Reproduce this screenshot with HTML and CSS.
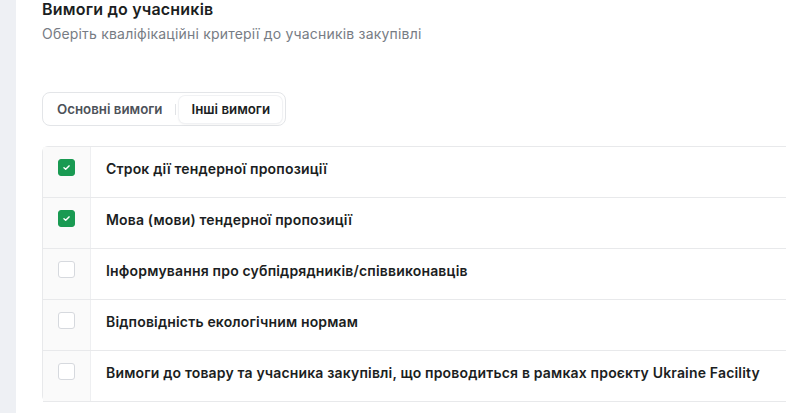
FILE: index.html
```html
<!DOCTYPE html>
<html lang="uk">
<head>
<meta charset="utf-8">
<link rel="stylesheet" href="styles.css">
</head>
<body>
<div class="page">
  <aside class="rail"></aside>
  <main class="content">
    <h1 class="title">Вимоги до учасників</h1>
    <p class="subtitle">Оберіть кваліфікаційні критерії до учасників закупівлі</p>
    <div class="tabs">
      <button class="tab">Основні вимоги</button>
      <span class="sep"></span>
      <button class="tab active">Інші вимоги</button>
    </div>
    <div class="table">
      <div class="row">
        <div class="cell-check"><span class="box checked"><svg viewBox="0 0 10 10" width="9" height="9"><path d="M2.2 5.3 L4.1 7 L7.8 3.2" fill="none" stroke="#fff" stroke-width="1.6" stroke-linecap="round" stroke-linejoin="round"/></svg></span></div>
        <div class="cell-text">Строк дії тендерної пропозиції</div>
      </div>
      <div class="row">
        <div class="cell-check"><span class="box checked"><svg viewBox="0 0 10 10" width="9" height="9"><path d="M2.2 5.3 L4.1 7 L7.8 3.2" fill="none" stroke="#fff" stroke-width="1.6" stroke-linecap="round" stroke-linejoin="round"/></svg></span></div>
        <div class="cell-text">Мова (мови) тендерної пропозиції</div>
      </div>
      <div class="row">
        <div class="cell-check"><span class="box"></span></div>
        <div class="cell-text">Інформування про субпідрядників/співвиконавців</div>
      </div>
      <div class="row">
        <div class="cell-check"><span class="box"></span></div>
        <div class="cell-text">Відповідність екологічним нормам</div>
      </div>
      <div class="row">
        <div class="cell-check"><span class="box"></span></div>
        <div class="cell-text">Вимоги до товару та учасника закупівлі, що проводиться в рамках проєкту Ukraine Facility</div>
      </div>
    </div>
  </main>
</div>
</body>
</html>
```

FILE: styles.css
```css
* { box-sizing: border-box; }
html, body { margin: 0; padding: 0; background: #fff; }
body {
  font-family: Inter, "Noto Sans", "DejaVu Sans", sans-serif;
  color: #1d2125;
  overflow: hidden;
  width: 786px;
  height: 413px;
}
.page { display: flex; height: 413px; }
.rail { width: 16px; flex: none; background: #eef0f4; }
.content {
  flex: 1;
  padding: 0 0 0 26px;
  min-width: 0;
}
.title {
  margin: -1px 0 0;
  font-size: 16px;
  line-height: 20px;
  font-weight: 600;
  color: #1b1e22;
  letter-spacing: 0.2px;
}
.subtitle {
  margin: 6px 0 0;
  font-size: 14px;
  line-height: 18px;
  color: #777c84;
  letter-spacing: 0.2px;
}
.tabs {
  margin-top: 49px;
  display: inline-flex;
  align-items: center;
  height: 34px;
  padding: 3px;
  border: 1px solid #e3e5e8;
  border-radius: 8px;
  background: #fff;
}
.tab {
  font-family: inherit;
  border: none;
  background: transparent;
  font-size: 13.3px;
  font-weight: 600;
  color: #4d5259;
  height: 27px;
  padding: 0 11px;
  border-radius: 6px;
  cursor: pointer;
}
.tab.active {
  background: #fff;
  color: #1b1e22;
  box-shadow: 0 0 0 1px #f1f2f4, 0 1px 3px rgba(0,0,0,0.08);
  padding: 0 12px;
  margin-left: 3px;
}
.sep {
  width: 1px;
  height: 11px;
  background: #e1e3e6;
  margin-left: 2px;
}
.table {
  margin-top: 20px;
  border-top: 1px solid #e8e9eb;
  border-left: 1px solid #e8e9eb;
  border-radius: 6px 0 0 6px;
  width: 760px;
}
.row {
  display: flex;
  height: 51px;
  border-bottom: 1px solid #e8e9eb;
}
.cell-check {
  width: 48px;
  flex: none;
  background: #fafafa;
  border-right: 1px solid #eeeff1;
  padding: 12px 0 0 15px;
}
.cell-text {
  padding: 12px 0 0 15px;
  font-size: 14px;
  line-height: 20px;
  font-weight: 600;
  color: #1b1e22;
  white-space: nowrap;
  letter-spacing: 0.17px;
}
.box {
  display: flex;
  align-items: center;
  justify-content: center;
  width: 17px;
  height: 17px;
  border-radius: 3px;
  border: 1px solid #d6d9de;
  background: #fff;
}
.box.checked {
  background: #199a52;
  border-color: #199a52;
}
```
